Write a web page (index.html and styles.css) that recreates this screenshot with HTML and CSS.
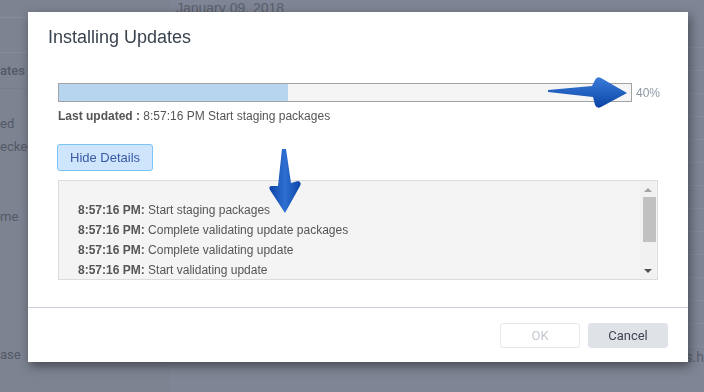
FILE: index.html
```html
<!DOCTYPE html>
<html lang="en">
<head>
    <meta charset="UTF-8">
    <meta name="viewport" content="width=device-width, initial-scale=1.0">
    <title>Installing Updates</title>
    <link rel="stylesheet" href="styles.css">
</head>
<body>
    <!-- page behind the dialog (dimmed) -->
    <div class="page">
        <aside class="sidebar">
            <div class="side-row top"></div>
            <div class="side-row mid"></div>
            <div class="side-row head">ates</div>
            <ul class="side-list">
                <li>ed</li>
                <li>ecked</li>
                <li class="gap">me</li>
                <li class="last">ase</li>
            </ul>
        </aside>
        <main class="content">
            <div class="date">January 09, 2018</div>
            <ul class="rows">
                <li></li><li></li><li></li><li></li><li></li>
                <li></li><li></li><li></li><li></li><li></li>
                <li></li><li></li><li></li>
                <li class="file">es.h</li>
            </ul>
        </main>
    </div>

    <div class="overlay">
        <div class="modal">
            <div class="modal-header">
                <h2>Installing Updates</h2>
            </div>
            <div class="modal-body">
                <div class="progress-row">
                    <div class="progress">
                        <div class="progress-fill" style="width: 40%"></div>
                    </div>
                    <span class="pct">40%</span>
                </div>
                <div class="last-updated"><b>Last updated :</b> 8:57:16 PM Start staging packages</div>

                <button class="btn-details" type="button">Hide Details</button>

                <div class="log">
                    <ul class="log-lines">
                        <li><b>8:57:16 PM:</b> Start staging packages</li>
                        <li><b>8:57:16 PM:</b> Complete validating update packages</li>
                        <li><b>8:57:16 PM:</b> Complete validating update</li>
                        <li><b>8:57:16 PM:</b> Start validating update</li>
                    </ul>
                    <div class="scrollbar">
                        <span class="arrow-up"></span>
                        <span class="thumb"></span>
                        <span class="arrow-down"></span>
                    </div>
                </div>
            </div>
            <div class="modal-footer">
                <button class="btn btn-ok" type="button" disabled>OK</button>
                <button class="btn btn-cancel" type="button">Cancel</button>
            </div>
        </div>
    </div>

    <!-- annotation arrows drawn over the screenshot -->
    <svg class="marks" width="704" height="392" viewBox="0 0 704 392">
        <defs>
            <linearGradient id="blue" x1="0" y1="0" x2="0" y2="1">
                <stop offset="0" stop-color="#3a7bd8"/>
                <stop offset="1" stop-color="#0b45a6"/>
            </linearGradient>
            <linearGradient id="blue2" x1="0" y1="0" x2="1" y2="0">
                <stop offset="0" stop-color="#0b45a6"/>
                <stop offset="0.5" stop-color="#2e6fd2"/>
                <stop offset="1" stop-color="#0b45a6"/>
            </linearGradient>
        </defs>
        <path fill="url(#blue)" d="M548,90 L592,86 L595,80 Q597,76 601,78 L627,93 L601,107 Q597,109 595,105 L593,97 L548,92 Z"/>
        <path fill="url(#blue2)" d="M282,149 L286,149 L291,183 L298,181 Q302,182 300,186 L285,213 L270,190 Q268,186 272,186 L278,186 Z"/>
    </svg>
</body>
</html>
```

FILE: styles.css
```css
body {
    margin: 0;
    width: 704px;
    height: 392px;
    overflow: hidden;
    background-color: #7f8594;
    font-family: Roboto, "Liberation Sans", sans-serif;
}
ul {
    list-style: none;
    margin: 0;
    padding: 0;
}

/* dimmed page */
.page {
    display: flex;
    height: 392px;
}
.sidebar {
    width: 182px;
    background-color: #7d8391;
    color: #535966;
    font-size: 13px;
}
.side-row {
    border-bottom: 1px solid #868c99;
}
.side-row.top {
    height: 17px;
}
.side-row.mid {
    height: 34px;
}
.side-row.head {
    height: 35px;
    line-height: 35px;
    font-weight: 500;
    border-bottom-color: #787e8b;
}
.side-list {
    padding-top: 23px;
}
.side-list li {
    line-height: 23px;
}
.side-list .gap {
    margin-top: 47px;
}
.side-list .last {
    margin-top: 115px;
}
.content {
    flex: 1;
}
.date {
    padding: 0 0 0 6px;
    height: 17px;
    line-height: 17px;
    color: #5a606d;
    font-size: 14px;
    font-family: "Liberation Sans", Arial, sans-serif;
}
.rows {
    margin-top: 30px;
    border-top: 1px solid #858b98;
}
.rows li {
    height: 22px;
    border-bottom: 1px solid #858b98;
}
.rows .file {
    padding-left: 508px;
    color: #5a606d;
    font-size: 14px;
    line-height: 20px;
    border-bottom: none;
}

/* dialog */
.overlay {
    position: fixed;
    top: 0;
    left: 0;
    right: 0;
    bottom: 0;
    padding: 12px 0 0 28px;
}
.modal {
    width: 660px;
    height: 350px;
    background: #fff;
    box-shadow: 2px 4px 10px rgba(0, 0, 0, 0.45);
    display: flex;
    flex-direction: column;
    font-family: "Liberation Sans", Arial, sans-serif;
}
.modal-header {
    padding: 15px 20px 0;
}
.modal-header h2 {
    margin: 0;
    font-size: 18px;
    font-weight: normal;
    line-height: 20px;
    color: #3a4350;
}
.modal-body {
    flex: 1;
    padding: 36px 30px 0;
}
.progress-row {
    display: flex;
    align-items: center;
    gap: 4px;
    width: 610px;
}
.progress {
    flex: none;
    width: 574px;
    height: 19px;
    box-sizing: border-box;
    border: 1px solid #a2a2a2;
    background: #f5f5f5;
}
.progress-fill {
    height: 100%;
    background: #b8d5ef;
}
.pct {
    font-size: 12px;
    color: #8d99a5;
}
.last-updated {
    margin-top: 7px;
    font-size: 12px;
    line-height: 14px;
    color: #555;
}
.btn-details {
    display: block;
    margin: 21px 0 0 -1px;
    height: 27px;
    padding: 0 12px;
    border: 1px solid #7cc3f6;
    border-radius: 3px;
    background: #cfe5fc;
    color: #3a5aa8;
    font-family: "Liberation Sans", Arial, sans-serif;
    font-size: 13px;
}
.log {
    margin-top: 9px;
    height: 100px;
    box-sizing: border-box;
    border: 1px solid #dcdcdc;
    background: #f4f4f4;
    display: flex;
}
.log-lines {
    flex: 1;
    padding: 19px 0 0 19px;
    overflow: hidden;
    font-size: 12px;
    line-height: 20px;
    color: #555;
}
.scrollbar {
    width: 16px;
    margin-right: 1px;
    background: #f1f1f1;
    display: flex;
    flex-direction: column;
    align-items: center;
}
.arrow-up {
    margin: 7px 0 5px;
    border: 4px solid transparent;
    border-top: none;
    border-bottom: 4px solid #a3a3a3;
}
.thumb {
    margin-left: 2px;
    width: 13px;
    height: 45px;
    background: #c1c1c1;
}
.arrow-down {
    margin-top: auto;
    margin-bottom: 6px;
    border: 4px solid transparent;
    border-bottom: none;
    border-top: 4px solid #505050;
}
.modal-footer {
    height: 55px;
    border-top: 1px solid #c9d0d7;
    padding: 15px 20px 0;
    box-sizing: border-box;
    display: flex;
    justify-content: flex-end;
    align-items: flex-start;
    gap: 8px;
}
.btn {
    width: 80px;
    height: 25px;
    border-radius: 3px;
    font-family: Roboto, "Liberation Sans", sans-serif;
    font-size: 13px;
    padding: 0;
}
.btn-ok {
    background: #fff;
    border: 1px solid #e3e6ea;
    color: #c4c9cf;
}
.btn-cancel {
    background: #dfe2e7;
    border: 1px solid #dfe2e7;
    color: #3d4552;
}

.marks {
    position: fixed;
    top: 0;
    left: 0;
    pointer-events: none;
}
```
